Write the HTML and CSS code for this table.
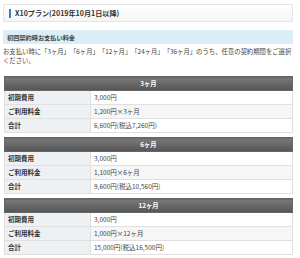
FILE: index.html
```html
<!DOCTYPE html>
<html lang="ja">
<head>
<meta charset="utf-8">
<link rel="stylesheet" href="styles.css">
</head>
<body>
<div class="wrap">
  <h2 class="title"><span class="title-text">X10プラン(2019年10月1日以降)</span></h2>
  <h3 class="sub">初回契約時お支払い料金</h3>
  <p class="lead">お支払い時に「3ヶ月」「6ヶ月」「12ヶ月」「24ヶ月」「36ヶ月」のうち、任意の契約期間をご選択ください。</p>

  <table class="plan">
    <tr><th colspan="2" class="head">3ヶ月</th></tr>
    <tr><th>初期費用</th><td>3,000円</td></tr>
    <tr class="alt"><th>ご利用料金</th><td>1,200円×3ヶ月</td></tr>
    <tr><th>合計</th><td>6,600円(税込7,260円)</td></tr>
  </table>

  <table class="plan">
    <tr><th colspan="2" class="head">6ヶ月</th></tr>
    <tr><th>初期費用</th><td>3,000円</td></tr>
    <tr class="alt"><th>ご利用料金</th><td>1,100円×6ヶ月</td></tr>
    <tr><th>合計</th><td>9,600円(税込10,560円)</td></tr>
  </table>

  <table class="plan">
    <tr><th colspan="2" class="head">12ヶ月</th></tr>
    <tr><th>初期費用</th><td>3,000円</td></tr>
    <tr class="alt"><th>ご利用料金</th><td>1,000円×12ヶ月</td></tr>
    <tr><th>合計</th><td>15,000円(税込16,500円)</td></tr>
  </table>
</div>
</body>
</html>
```

FILE: styles.css
```css
html, body {
  margin: 0;
  padding: 0;
  background: #fff;
}
body {
  font-family: "Noto Sans CJK JP", "Noto Sans", sans-serif;
  color: #333;
  text-spacing-trim: space-all;
}
.wrap {
  width: 290px;
  padding: 4px 0 0 3px;
}
.title {
  margin: 0;
  height: 18px;
  box-sizing: border-box;
  border: 1px solid #e4e4e4;
  background: linear-gradient(#ffffff, #f5f5f5);
  display: flex;
  align-items: center;
  padding-left: 5px;
}
.title-text {
  font-size: 7.1px;
  font-weight: bold;
  color: #333;
  border-left: 2px solid #2f86c3;
  padding-left: 4px;
  line-height: 9px;
}
.sub {
  margin: 8px 0 0 0;
  height: 14px;
  background: #dbedf6;
  font-size: 6.2px;
  font-weight: bold;
  color: #444;
  display: flex;
  align-items: center;
  padding-left: 4px;
}
.lead {
  margin: 4px 0 0 0;
  font-size: 6.35px;
  line-height: 8.5px;
  color: #444;
}
.plan {
  width: 289px;
  margin: 11px 0 0 1px;
  border-collapse: collapse;
  font-size: 6.5px;
}
.plan + .plan {
  margin-top: 4px;
}
.plan th, .plan td {
  border: 1px solid #e0e0e0;
  height: 13px;
  padding: 0 0 0 3px;
  text-align: left;
  vertical-align: middle;
  line-height: 9px;
}
.plan th {
  width: 82px;
  background: #edf1f4;
  font-weight: bold;
  color: #333;
}
.plan td {
  background: #fff;
  color: #444;
}
.plan tr.alt td {
  background: #f6f6f6;
}
.plan th.head {
  background: linear-gradient(#7a7a7a, #555);
  color: #fff;
  text-align: center;
  border-color: #666;
  padding: 0;
  font-size: 6.3px;
}
```
